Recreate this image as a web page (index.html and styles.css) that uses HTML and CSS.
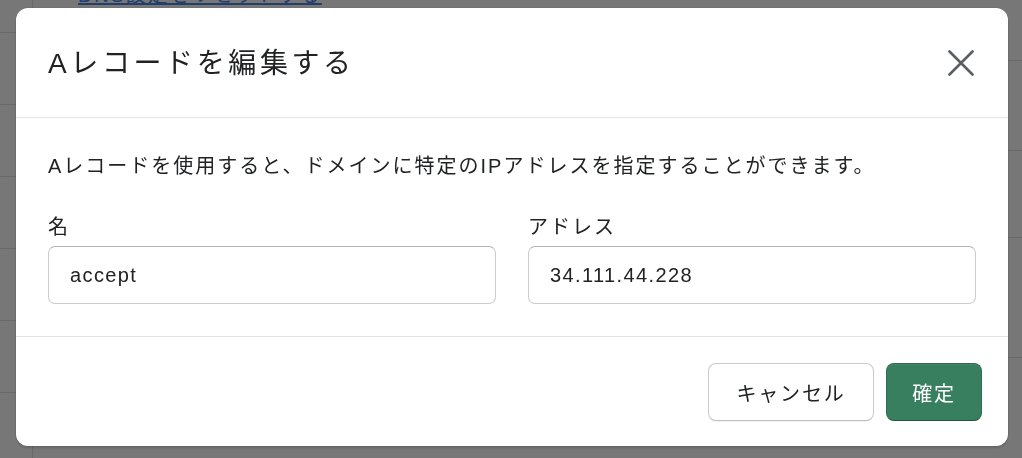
FILE: index.html
```html
<!DOCTYPE html>
<html lang="ja">
<head>
<meta charset="utf-8">
<title>Aレコードを編集する</title>
<link rel="stylesheet" href="styles.css">
</head>
<body>
<div class="app">
  <aside class="rail">
    <div class="rail-row first"></div>
    <div class="rail-row"></div>
    <div class="rail-row"></div>
    <div class="rail-row"></div>
    <div class="rail-row"></div>
    <div class="rail-row"></div>
    <div class="rail-row"></div>
  </aside>
  <main class="main">
    <a class="reset-link" href="#">DNS設定をリセットする</a>
    <div class="list">
      <div class="list-row r1"></div>
      <div class="list-row r2"></div>
      <div class="list-row r3"></div>
      <div class="list-row r4"></div>
    </div>
  </main>
</div>

<div class="overlay">
  <div class="modal" role="dialog" aria-labelledby="modal-title">
    <header class="modal-header">
      <h2 id="modal-title" class="modal-title">Aレコードを編集する</h2>
      <button class="close-btn" aria-label="閉じる">
        <svg width="26" height="26" viewBox="0 0 26 26" fill="none" stroke="#5c5f62" stroke-width="2.6" stroke-linecap="round">
          <path d="M1.5 1.5 L24.5 24.5 M24.5 1.5 L1.5 24.5"/>
        </svg>
      </button>
    </header>
    <section class="modal-body">
      <p class="desc">Aレコードを使用すると、ドメインに特定のIPアドレスを指定することができます。</p>
      <div class="fields">
        <label class="field">
          <span class="field-label">名</span>
          <span class="input">accept</span>
        </label>
        <label class="field">
          <span class="field-label">アドレス</span>
          <span class="input">34.111.44.228</span>
        </label>
      </div>
    </section>
    <footer class="modal-footer">
      <button class="btn btn-secondary">キャンセル</button>
      <button class="btn btn-primary">確定</button>
    </footer>
  </div>
</div>
</body>
</html>
```

FILE: styles.css
```css
* { box-sizing: border-box; }

html, body {
  margin: 0;
  padding: 0;
  height: 100%;
  overflow: hidden;
}

body {
  background: #ffffff;
  font-family: "Liberation Sans", "Noto Sans CJK JP", sans-serif;
  color: #202223;
}

/* underlying page */
.app {
  display: flex;
  height: 100%;
}

.rail {
  width: 33px;
  border-right: 1px solid #e2e2e2;
  flex-shrink: 0;
}

.rail-row {
  height: 72px;
  border-bottom: 1px solid #e2e2e2;
}

.rail-row.first { height: 33px; }

.main {
  flex: 1;
  display: flex;
  flex-direction: column;
}

.reset-link {
  margin: -17px 0 0 45px;
  font-size: 20px;
  line-height: 25px;
  letter-spacing: 1.8px;
  color: #4a86e6;
  text-decoration: underline;
  align-self: flex-start;
  white-space: nowrap;
}

.list-row { border-bottom: 1px solid #e2e2e2; }
.list-row.r1 { height: 53px; }
.list-row.r2 { height: 90px; }
.list-row.r3 { height: 87px; }
.list-row.r4 { height: 120px; }

/* overlay + modal */
.overlay {
  position: fixed;
  inset: 0;
  background: rgba(0, 0, 0, 0.533);
  display: flex;
  align-items: flex-start;
  padding: 8px 0 0 16px;
}

.modal {
  width: 992px;
  background: #ffffff;
  border-radius: 12px;
  box-shadow: 0 0 0 1px rgba(0,0,0,0.04), 0 2px 3px rgba(0,0,0,0.15);
  overflow: hidden;
}

.modal-header {
  height: 110px;
  border-bottom: 1px solid #e1e3e5;
  display: flex;
  align-items: center;
  justify-content: space-between;
  padding: 0 34px 0 32px;
}

.modal-title {
  margin: 0 0 -3px;
  font-size: 28px;
  font-weight: 400;
  letter-spacing: 3.6px;
  line-height: 36px;
  color: #202223;
}

.close-btn {
  border: 0;
  background: none;
  padding: 0;
  width: 26px;
  height: 26px;
  margin-top: 1px;
  display: flex;
  cursor: pointer;
}

.modal-body {
  padding: 34px 32px 32px;
  border-bottom: 1px solid #e1e3e5;
  display: flex;
  flex-direction: column;
  gap: 33px;
}

.desc {
  margin: 0;
  font-size: 20px;
  line-height: 28px;
  letter-spacing: 2px;
}

.fields {
  display: grid;
  grid-template-columns: 1fr 1fr;
  gap: 32px;
}

.field {
  display: flex;
  flex-direction: column;
  gap: 5px;
}

.field-label {
  font-size: 20px;
  line-height: 28px;
  letter-spacing: 2px;
}

.input {
  height: 58px;
  border: 1px solid #c9cccf;
  border-top-color: #aeb4b9;
  border-radius: 7px;
  display: flex;
  align-items: center;
  padding: 0 20px 0 21px;
  font-size: 20px;
  letter-spacing: 1.4px;
  color: #202223;
}

.modal-footer {
  display: flex;
  justify-content: flex-end;
  gap: 12px;
  padding: 26px 26px 25px;
}

.btn {
  height: 58px;
  border-radius: 8px;
  font-family: inherit;
  font-size: 20px;
  letter-spacing: 1.8px;
  padding: 0;
  white-space: nowrap;
  display: flex;
  align-items: center;
  justify-content: center;
  cursor: pointer;
}

.btn-secondary {
  width: 166px;
  background: #ffffff;
  border: 1px solid #c9cccf;
  border-bottom-color: #babfc3;
  color: #202223;
  box-shadow: 0 1px 0 rgba(0,0,0,0.05);
}

.btn-primary {
  width: 96px;
  background: #377f5f;
  border: 1px solid #2f6e52;
  border-bottom-color: #22563f;
  color: #ffffff;
  box-shadow: inset 0 1px 0 rgba(255,255,255,0.06);
}
```
